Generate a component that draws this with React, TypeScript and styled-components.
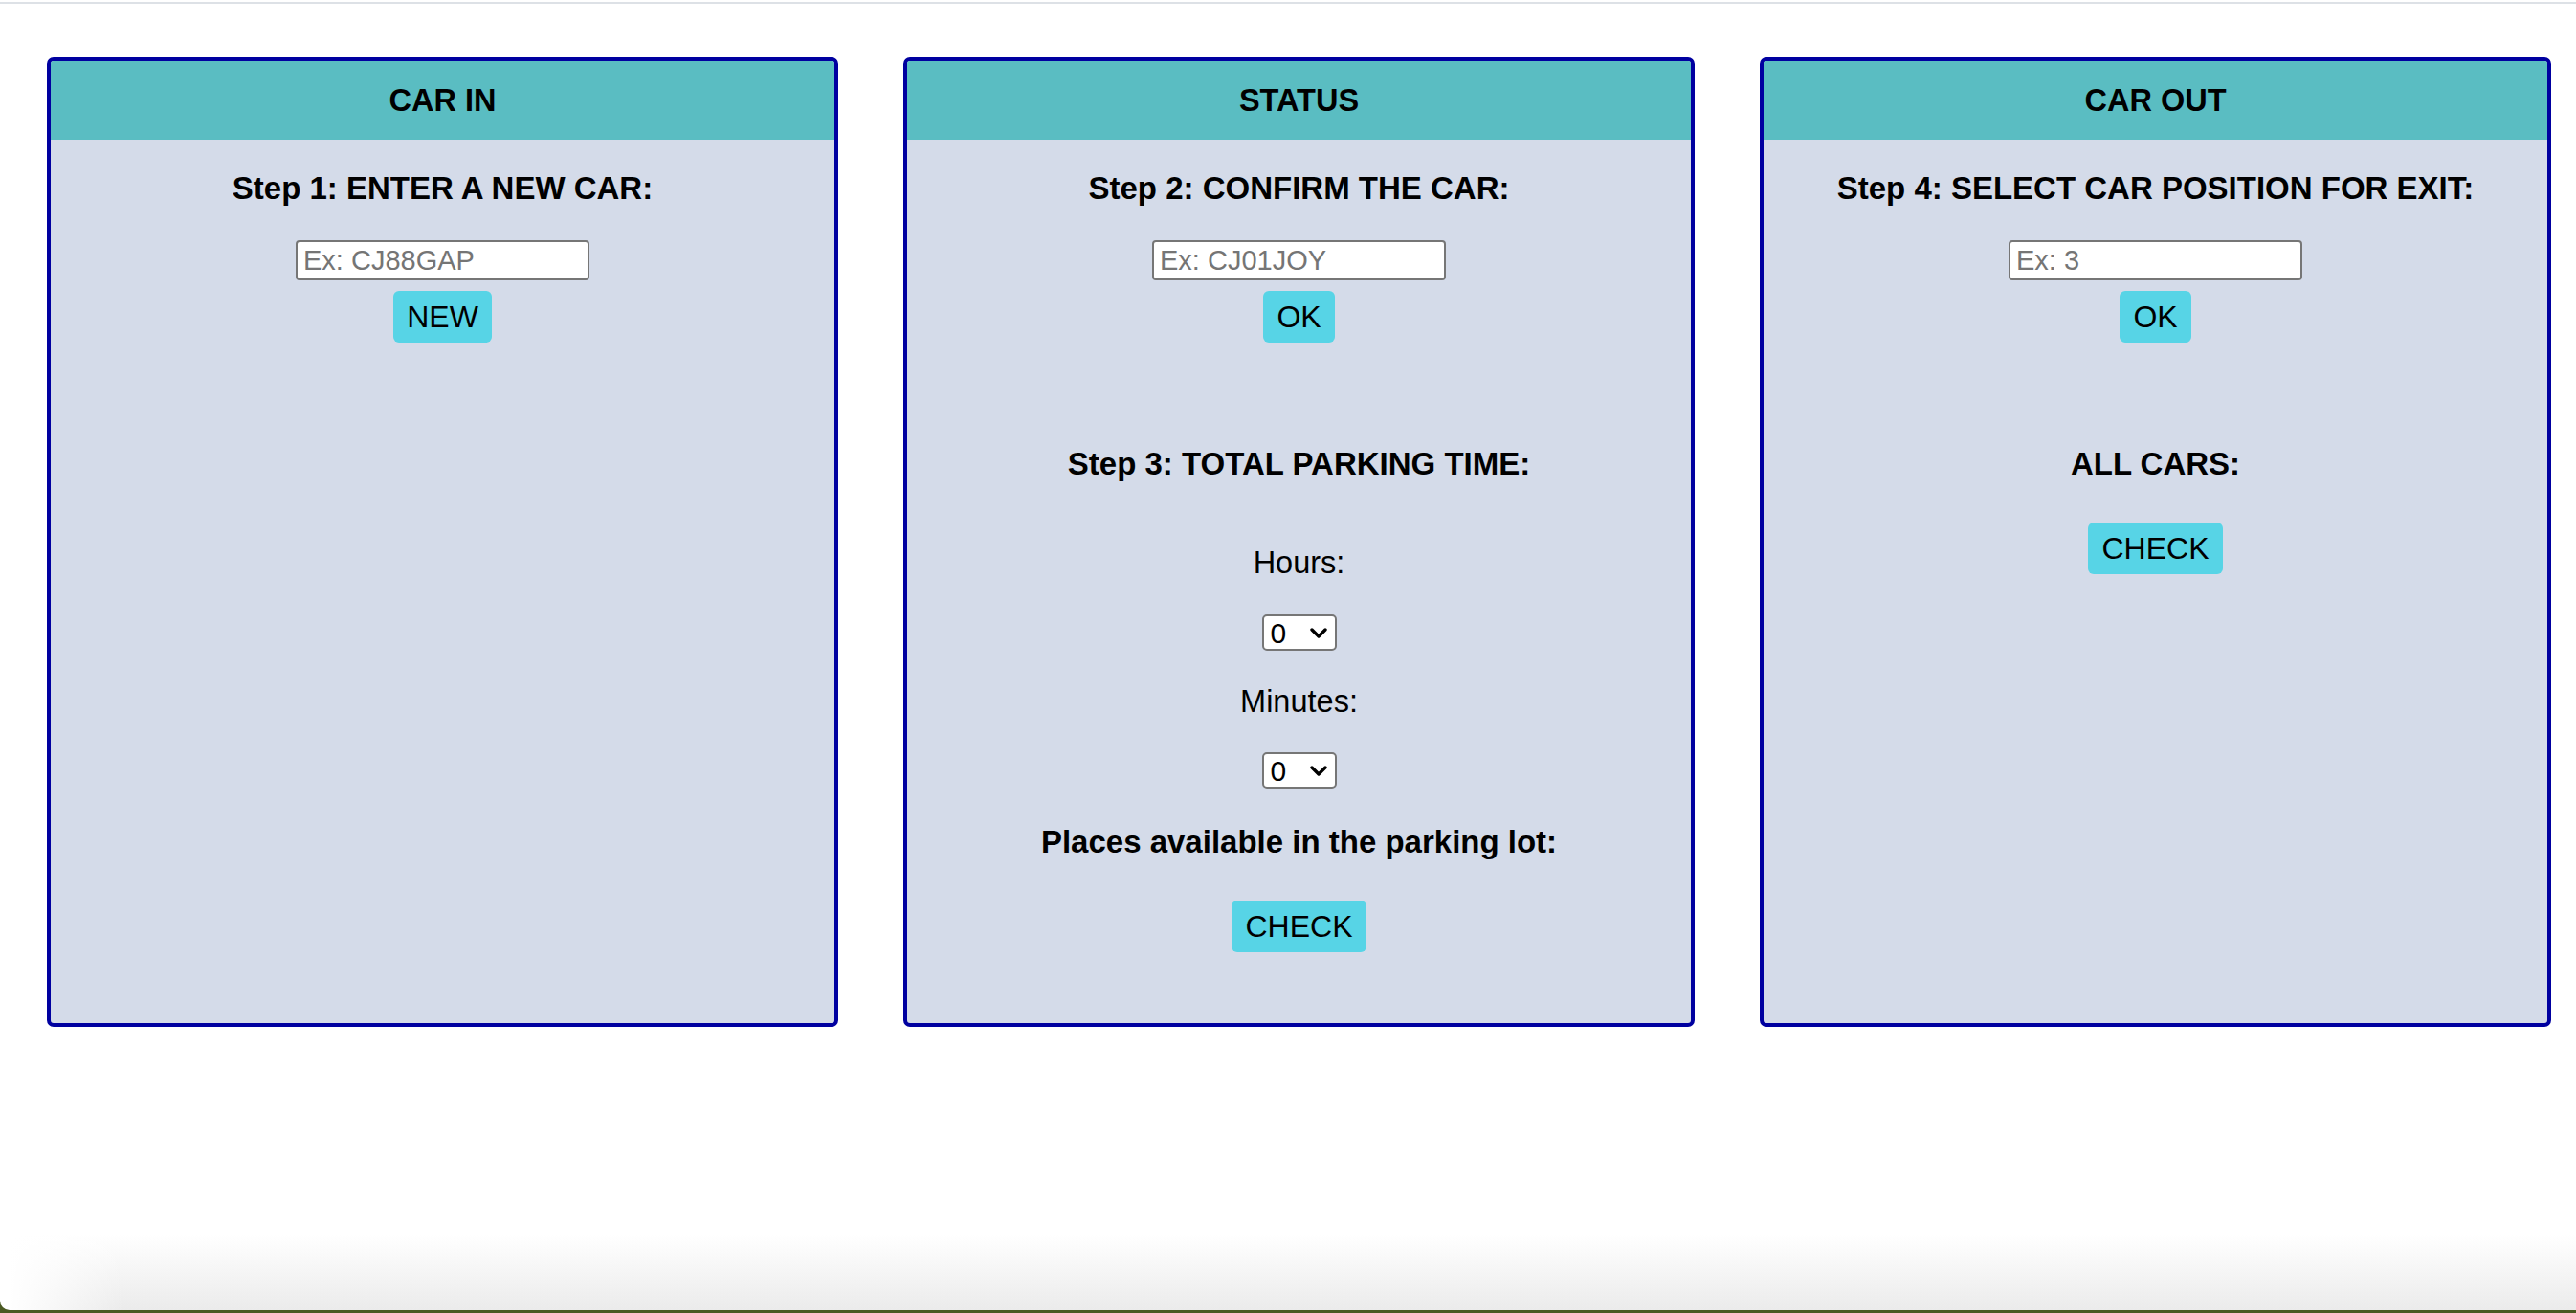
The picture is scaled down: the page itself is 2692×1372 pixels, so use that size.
import React from "react";
import styled, { createGlobalStyle } from "styled-components";

const GlobalStyle = createGlobalStyle`
  html, body {
    margin: 0;
    padding: 0;
  }
  body {
    background: #4a5922;
    font-family: "Liberation Sans", Arial, Helvetica, sans-serif;
    color: #000;
  }
  * { box-sizing: border-box; }
`;

const Window = styled.div`
  height: 1369px;
  overflow: hidden;
  border-bottom-left-radius: 10px;
  background:
    linear-gradient(to right, rgba(255,255,255,1) 10px, rgba(255,255,255,0) 130px),
    linear-gradient(to bottom, #ffffff 0, #ffffff 1290px, #ebebeb 1369px);
  display: flex;
  flex-direction: column;
`;

const TopRule = styled.div`
  height: 2px;
  margin-top: 2px;
  background: #dde1e6;
  flex: none;
`;

const Board = styled.main`
  display: flex;
  align-items: flex-start;
  gap: 68px;
  padding: 56px 0 0 49px;
`;

const Panel = styled.section`
  width: 827px;
  height: 1013px;
  border: 4px solid #0000a0;
  border-radius: 7px;
  background: #d4dbe9;
  overflow: hidden;
  display: flex;
  flex-direction: column;
  align-items: center;
  flex: none;
`;

const PanelHeader = styled.header`
  align-self: stretch;
  height: 82px;
  background: #5abdc2;
  display: flex;
  align-items: center;
  justify-content: center;
  font-weight: bold;
  font-size: 32.5px;
  line-height: 37px;
`;

const Heading = styled.h4<{ $mt: number }>`
  margin: ${(p) => p.$mt}px 0 0;
  font-weight: bold;
  font-size: 33px;
  line-height: 37px;
  text-align: center;
`;

const Label = styled.p<{ $mt: number }>`
  margin: ${(p) => p.$mt}px 0 0;
  font-weight: normal;
  font-size: 32.5px;
  line-height: 37px;
  text-align: center;
`;

const TextField = styled.input<{ $mt: number }>`
  margin: ${(p) => p.$mt}px 0 0;
  width: 307px;
  height: 42px;
  border: 2px solid #767676;
  border-radius: 4px;
  background: #fff;
  padding: 0 6px;
  font-family: "Liberation Sans", Arial, Helvetica, sans-serif;
  font-size: 29px;
  color: #000;
  outline: none;
  &::placeholder {
    color: #757575;
  }
`;

const ActionButton = styled.button<{ $mt: number }>`
  margin: ${(p) => p.$mt}px 0 0;
  height: 54px;
  padding: 0 14px;
  border: none;
  border-radius: 6px;
  background: #57d4e6;
  font-family: "Liberation Sans", Arial, Helvetica, sans-serif;
  font-size: 32px;
  line-height: 37px;
  color: #000;
  cursor: pointer;
`;

const PickerWrap = styled.div<{ $mt: number }>`
  margin: ${(p) => p.$mt}px 0 0;
  position: relative;
  width: 78px;
  height: 38px;
`;

const Picker = styled.select`
  appearance: none;
  -webkit-appearance: none;
  width: 100%;
  height: 100%;
  border: 2px solid #767676;
  border-radius: 5px;
  background: #fff;
  padding: 0 0 0 7px;
  font-family: "Liberation Sans", Arial, Helvetica, sans-serif;
  font-size: 30px;
  color: #000;
  outline: none;
`;

const Chevron = styled.svg`
  position: absolute;
  left: 50px;
  top: 14px;
  width: 18px;
  height: 11px;
  pointer-events: none;
`;

function TimePicker({ mt }: { mt: number }) {
  return (
    <PickerWrap $mt={mt}>
      <Picker defaultValue="0">
        {Array.from({ length: 24 }, (_, i) => (
          <option key={i} value={String(i)}>
            {i}
          </option>
        ))}
      </Picker>
      <Chevron viewBox="0 0 18 11">
        <path d="M2 2 L9 9 L16 2" fill="none" stroke="#000" strokeWidth="3.4" strokeLinecap="round" strokeLinejoin="round" />
      </Chevron>
    </PickerWrap>
  );
}

export default function App() {
  return (
    <>
      <GlobalStyle />
      <Window>
        <TopRule />
        <Board>
          <Panel>
            <PanelHeader>CAR IN</PanelHeader>
            <Heading $mt={32}>Step 1: ENTER A NEW CAR:</Heading>
            <TextField $mt={36} placeholder="Ex: CJ88GAP" />
            <ActionButton $mt={11}>NEW</ActionButton>
          </Panel>

          <Panel>
            <PanelHeader>STATUS</PanelHeader>
            <Heading $mt={32}>Step 2: CONFIRM THE CAR:</Heading>
            <TextField $mt={36} placeholder="Ex: CJ01JOY" />
            <ActionButton $mt={11}>OK</ActionButton>
            <Heading $mt={108}>Step 3: TOTAL PARKING TIME:</Heading>
            <Label $mt={67}>Hours:</Label>
            <TimePicker mt={35} />
            <Label $mt={35}>Minutes:</Label>
            <TimePicker mt={34} />
            <Heading $mt={37}>Places available in the parking lot:</Heading>
            <ActionButton $mt={43}>CHECK</ActionButton>
          </Panel>

          <Panel>
            <PanelHeader>CAR OUT</PanelHeader>
            <Heading $mt={32}>Step 4: SELECT CAR POSITION FOR EXIT:</Heading>
            <TextField $mt={36} placeholder="Ex: 3" />
            <ActionButton $mt={11}>OK</ActionButton>
            <Heading $mt={108}>ALL CARS:</Heading>
            <ActionButton $mt={43}>CHECK</ActionButton>
          </Panel>
        </Board>
      </Window>
    </>
  );
}
